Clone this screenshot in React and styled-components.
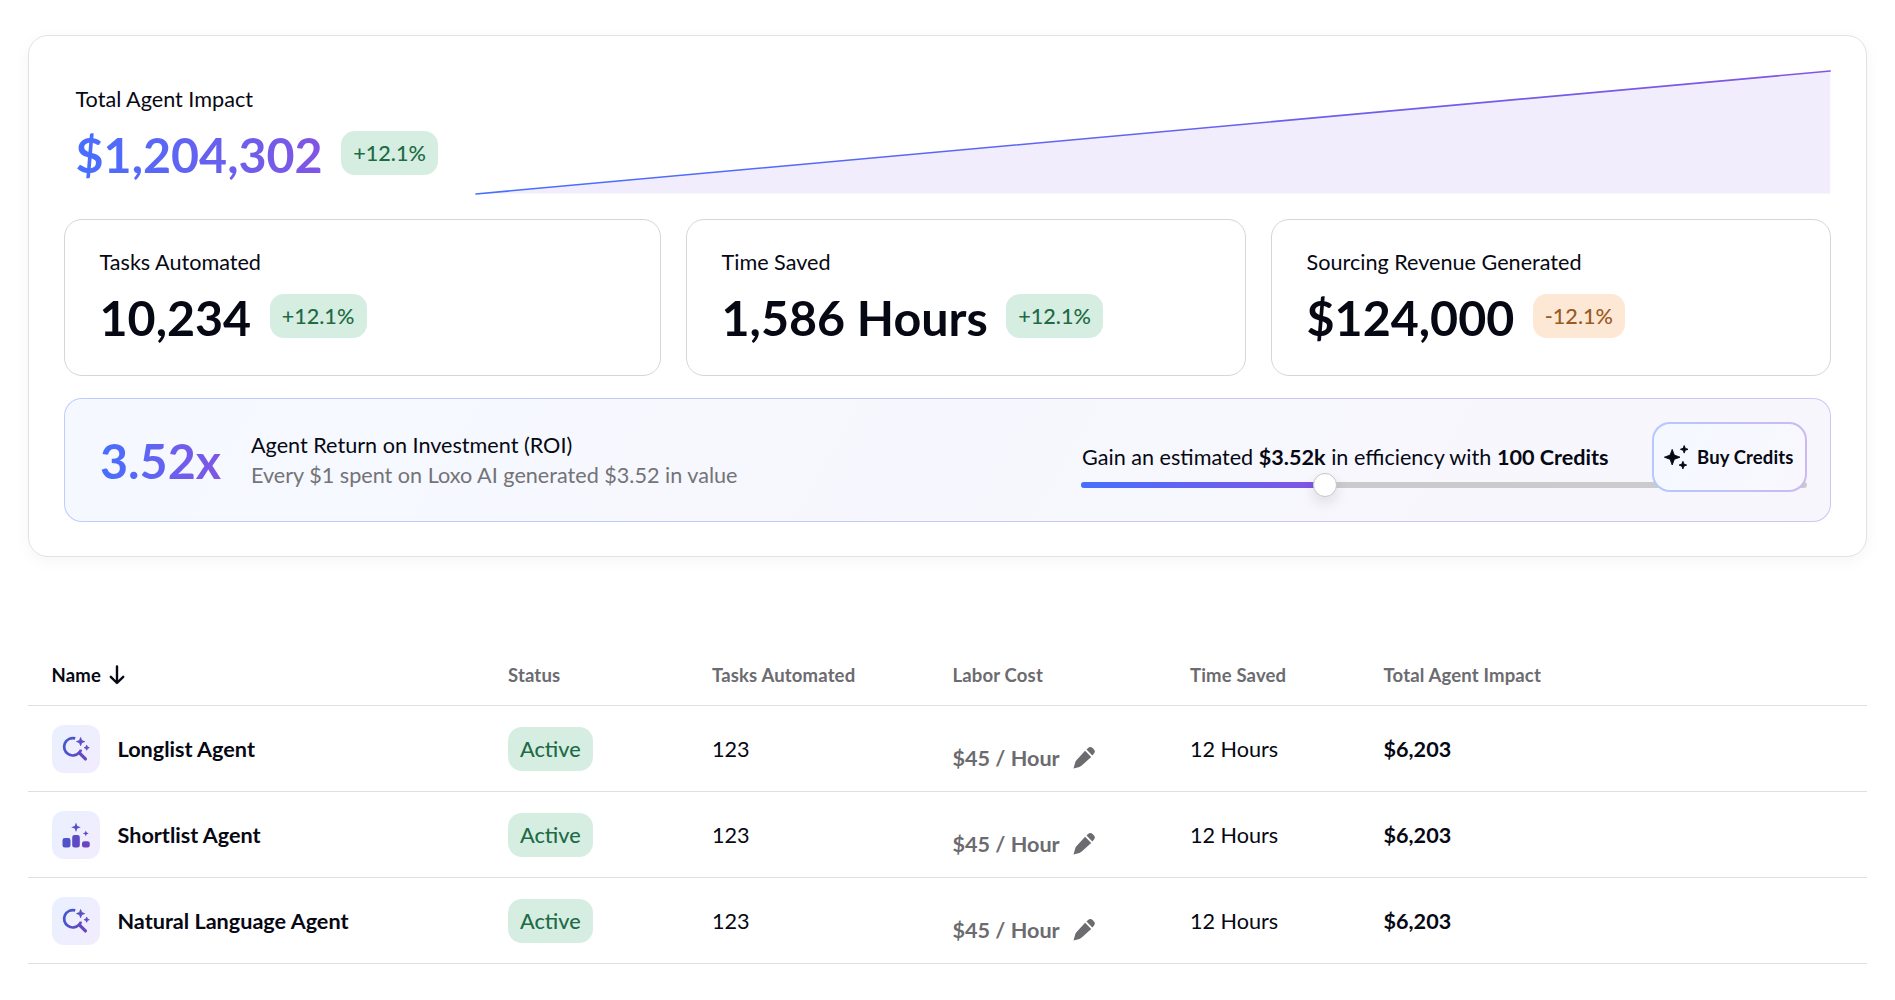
import { useState } from 'react';
import styled, { createGlobalStyle } from 'styled-components';

const GlobalStyle = createGlobalStyle`
  * {
    box-sizing: border-box;
  }
  body {
    margin: 0;
    background-color: #fff;
    color: #060813;
    font-family: Lato, 'Liberation Sans', sans-serif;
    font-size: 21.62px;
    line-height: 30px;
  }
`;

const Page = styled.div`
  padding: 35px 28px 0 27.5px;
`;
const ImpactCard = styled.section`
  height: 522px;
  padding: 34px 35px;
  border: 1px solid #e2e2e4;
  border-radius: 20px;
  background-color: #fff;
  box-shadow: 0 4px 16px rgba(0, 0, 0, 0.045);
`;
const TotalRow = styled.div`
  display: flex;
  height: 125px;
`;
const TotalBlock = styled.div`
  width: 411.5px;
  padding: 14px 0 0 12px;
`;
const Label = styled.div`
  white-space: nowrap;
`;
const ValueRow = styled.div`
  display: flex;
  align-items: center;
  height: 58px;
  margin-top: 10px;
`;
const Value = styled.div`
  margin-right: 18.5px;
  padding-top: 2px;
  font-size: 48.4px;
  font-weight: 700;
  line-height: 58px;
  white-space: nowrap;
`;
const GradientValue = styled(Value)`
  background: linear-gradient(90deg, #476fff, #8155e3);
  background-clip: text;
  color: transparent;
`;
const Badge = styled.span`
  display: inline-flex;
  align-items: center;
  height: 44px;
  padding: 0 12.3px 0 12px;
  border-radius: 14px;
  font-weight: 500;
  color: ${({ $tone }) => ($tone === 'down' ? '#9a5a23' : '#1e6b46')};
  background-color: ${({ $tone }) => ($tone === 'down' ? '#fde8d6' : '#d6eee1')};
`;
const Chart = styled.svg`
  display: block;
  width: 1357px;
  height: 125px;
`;

const StatRow = styled.div`
  display: grid;
  grid-template-columns: 597px 560px 560px;
  column-gap: 25px;
  margin-top: 24px;
`;
const StatCard = styled.div`
  height: 157px;
  padding: 27px 35px;
  border: 1px solid #d6d6d8;
  border-radius: 18px;
`;

const RoiBar = styled.div`
  display: flex;
  align-items: center;
  height: 124px;
  margin-top: 22px;
  padding: 0 23px 0 35.5px;
  border: 1px solid transparent;
  border-radius: 18px;
  background:
    linear-gradient(120deg, #f5f9ff, #f8f6fd) padding-box,
    linear-gradient(90deg, #bccdff, #d2c3f7) border-box;
`;
const RoiValue = styled(GradientValue)`
  padding-top: 0;
`;
const RoiText = styled.div`
  flex: 1;
  margin-left: 11.5px;
`;
const Muted = styled.div`
  color: #737378;
`;
const Purchase = styled.div`
  position: relative;
  width: 726px;
  height: 76px;
  padding-top: 20px;
`;
const Offer = styled.div`
  padding-left: 1px;
`;
const Track = styled.div`
  display: flex;
  align-items: center;
  height: 6px;
  margin-top: 10px;
  border-radius: 3px;
  background-color: #cbcbcb;
`;
const Fill = styled.div`
  height: 6px;
  border-radius: 3px 0 0 3px;
  background: linear-gradient(90deg, #476fff, #8155e3);
`;
const Thumb = styled.div`
  width: 24px;
  height: 24px;
  margin-left: -12px;
  border: 1px solid #c6c6c9;
  border-radius: 50%;
  background-color: #fff;
  box-shadow: 0 6px 14px rgba(0, 0, 0, 0.11);
`;
// sits on top of the end of the slider
const BuyButton = styled.button`
  position: absolute;
  top: 0;
  right: 0;
  display: flex;
  align-items: center;
  gap: 8px;
  width: 155px;
  height: 70px;
  padding: 0 0 0 10px;
  border: 2px solid transparent;
  border-radius: 18px;
  background:
    linear-gradient(120deg, #f4f9ff, #f9f7fe) padding-box,
    linear-gradient(90deg, #b5c8ff, #cbb9f5) border-box;
  color: inherit;
  font-family: inherit;
  font-size: 18.5px;
  font-weight: 700;
  letter-spacing: 0.12px;
  white-space: nowrap;
  cursor: pointer;
`;

const AgentTable = styled.section`
  margin-top: 88px;
`;
const Row = styled.div`
  display: grid;
  grid-template-columns: 456.5px 204px 240.5px 237.5px 193.5px 1fr;
  align-items: center;
  height: ${({ $head }) => ($head ? '61px' : '86px')};
  padding-left: 24px;
  padding-top: ${({ $head }) => ($head ? '0' : '1px')};
  border-bottom: 1px solid #dfdfe2;
`;
const HeadCell = styled.div`
  display: flex;
  align-items: center;
  gap: 8.5px;
  font-size: 18.5px;
  font-weight: 700;
  letter-spacing: 0.16px;
  color: ${({ $active }) => ($active ? '#060813' : '#6b6b70')};
`;
const NameCell = styled.div`
  display: flex;
  align-items: center;
  gap: 18px;
  font-weight: 700;
`;
const IconTile = styled.div`
  display: flex;
  align-items: center;
  justify-content: center;
  width: 48px;
  height: 48px;
  border-radius: 12px;
  background: linear-gradient(120deg, #e9f0ff, #f2ecfd);
`;
const LaborCell = styled.div`
  display: flex;
  align-items: center;
  gap: 13px;
  padding-top: 18px;
  font-weight: 700;
  color: #6b6b70;
`;
const Strong = styled.div`
  font-weight: 700;
`;

const STATS = [
  { label: 'Tasks Automated', value: '10,234', change: '+12.1%', tone: 'up' },
  { label: 'Time Saved', value: '1,586 Hours', change: '+12.1%', tone: 'up' },
  {
    label: 'Sourcing Revenue Generated',
    value: '$124,000',
    change: '-12.1%',
    tone: 'down',
  },
];

const AGENTS = [
  { name: 'Longlist Agent', icon: 'search' },
  { name: 'Shortlist Agent', icon: 'podium' },
  { name: 'Natural Language Agent', icon: 'search' },
];

const COLUMNS = [
  'Status',
  'Tasks Automated',
  'Labor Cost',
  'Time Saved',
  'Total Agent Impact',
];

// four pointed star around (x, y) with radius r
function star(x, y, r) {
  const k = r * 0.27;
  return `M${x} ${y - r}L${x + k} ${y - k}L${x + r} ${y}L${x + k} ${y + k}L${x} ${y + r}L${x - k} ${y + k}L${x - r} ${y}L${x - k} ${y - k}Z`;
}

function IconGradient({ id }) {
  return (
    <defs>
      <linearGradient
        id={id}
        x1="0"
        y1="0"
        x2="28"
        y2="12"
        gradientUnits="userSpaceOnUse"
      >
        <stop stopColor="#3c5bd2" />
        <stop offset="1" stopColor="#6a45bd" />
      </linearGradient>
    </defs>
  );
}

function SearchIcon() {
  return (
    <svg width="28" height="28" viewBox="0 0 28 28" fill="none">
      <IconGradient id="searchFill" />
      <path
        d="M13.2 3.4A8.7 8.7 0 1 0 17.2 17.7Q18.6 16.6 18.8 14.6"
        stroke="url(#searchFill)"
        strokeWidth="2.7"
      />
      <path
        d="M17.3 17.8L23.4 23.9"
        stroke="url(#searchFill)"
        strokeWidth="3.3"
        strokeLinecap="round"
      />
      <path
        d={star(18.6, 6.6, 4.1) + star(24.7, 12.7, 2.6)}
        fill="url(#searchFill)"
        stroke="url(#searchFill)"
        strokeWidth="0.8"
        strokeLinejoin="round"
      />
    </svg>
  );
}

function PodiumIcon() {
  return (
    <svg width="28" height="28" viewBox="0 0 28 28">
      <IconGradient id="podiumFill" />
      <g fill="url(#podiumFill)">
        <path d="M2.8 17h3.4a2.3 2.3 0 0 1 2.3 2.3v5a2.3 2.3 0 0 1-2.3 2.3H2.8a2.3 2.3 0 0 1-2.3-2.3v-5A2.3 2.3 0 0 1 2.8 17z" />
        <path d="M12.5 14h3a2.3 2.3 0 0 1 2.3 2.3v8a2.3 2.3 0 0 1-2.3 2.3h-3a2.3 2.3 0 0 1-2.3-2.3v-8a2.3 2.3 0 0 1 2.3-2.3z" />
        <path d="M22.3 20.2h3.2a2.3 2.3 0 0 1 2.3 2.3v1.8a2.3 2.3 0 0 1-2.3 2.3h-3.2a2.3 2.3 0 0 1-2.3-2.3v-1.8a2.3 2.3 0 0 1 2.3-2.3z" />
        <path d={star(14, 6.3, 4.8) + star(23.8, 12.4, 3)} />
      </g>
    </svg>
  );
}

function SparklesIcon() {
  return (
    <svg width="25" height="25" viewBox="0 0 25 25" fill="currentColor">
      <path
        d={star(8.2, 12.2, 7.8) + star(20.2, 4.3, 3.8) + star(18.9, 20.1, 3.8)}
        stroke="currentColor"
        strokeWidth="0.9"
        strokeLinejoin="round"
      />
    </svg>
  );
}

function ArrowDownIcon() {
  return (
    <svg width="16" height="20" viewBox="0 0 16 20" fill="none">
      <path
        d="M8 1.5v16.2M1.8 11.8L8 18l6.2-6.2"
        stroke="currentColor"
        strokeWidth="2.4"
        strokeLinecap="round"
        strokeLinejoin="round"
      />
    </svg>
  );
}

function PencilIcon() {
  return (
    <svg width="22" height="22" viewBox="0 0 22 22" fill="currentColor">
      <path d="M12.1 3.8l6.1 6.1L8.7 18.6c-.7.6-1.4 1-2.3 1.3L.5 21.6l1.7-6.1c.2-.9.7-1.7 1.4-2.4z" />
      <path d="M13.5 2.6l1.3-1.3a3.6 3.6 0 0 1 5 0l.8.8a3.6 3.6 0 0 1 0 5l-1.3 1.3z" />
    </svg>
  );
}

function ImpactChart() {
  return (
    <Chart viewBox="0 0 1357 125">
      <defs>
        <linearGradient id="chartLine" x1="0" y1="0" x2="1" y2="0">
          <stop stopColor="#476fff" />
          <stop offset="1" stopColor="#8155e3" />
        </linearGradient>
      </defs>
      <path d="M0 124L1356 1V123.5H0z" fill="#f2edfd" />
      <path
        d="M1 124L1356 1"
        stroke="url(#chartLine)"
        strokeWidth="1.6"
        strokeLinecap="round"
      />
    </Chart>
  );
}

function App() {
  const [credits] = useState(33.6);

  return (
    <>
      <GlobalStyle />
      <Page>
        <ImpactCard>
          <TotalRow>
            <TotalBlock>
              <Label>Total Agent Impact</Label>
              <ValueRow>
                <GradientValue>$1,204,302</GradientValue>
                <Badge>+12.1%</Badge>
              </ValueRow>
            </TotalBlock>
            <ImpactChart />
          </TotalRow>
          <StatRow>
            {STATS.map((stat) => (
              <StatCard key={stat.label}>
                <Label>{stat.label}</Label>
                <ValueRow>
                  <Value>{stat.value}</Value>
                  <Badge $tone={stat.tone}>{stat.change}</Badge>
                </ValueRow>
              </StatCard>
            ))}
          </StatRow>
          <RoiBar>
            <RoiValue>3.52x</RoiValue>
            <RoiText>
              <div>Agent Return on Investment (ROI)</div>
              <Muted>Every $1 spent on Loxo AI generated $3.52 in value</Muted>
            </RoiText>
            <Purchase>
              <Offer>
                Gain an estimated <b>$3.52k</b> in efficiency with{' '}
                <b>100 Credits</b>
              </Offer>
              <Track>
                <Fill style={{ width: `${credits}%` }} />
                <Thumb />
              </Track>
              <BuyButton type="button">
                <SparklesIcon />
                Buy Credits
              </BuyButton>
            </Purchase>
          </RoiBar>
        </ImpactCard>

        <AgentTable>
          <Row $head>
            <HeadCell $active>
              Name
              <ArrowDownIcon />
            </HeadCell>
            {COLUMNS.map((column) => (
              <HeadCell key={column}>{column}</HeadCell>
            ))}
          </Row>
          {AGENTS.map((agent) => (
            <Row key={agent.name}>
              <NameCell>
                <IconTile>
                  {agent.icon === 'search' ? <SearchIcon /> : <PodiumIcon />}
                </IconTile>
                {agent.name}
              </NameCell>
              <div>
                <Badge>Active</Badge>
              </div>
              <div>123</div>
              <LaborCell>
                $45 / Hour
                <PencilIcon />
              </LaborCell>
              <div>12 Hours</div>
              <Strong>$6,203</Strong>
            </Row>
          ))}
        </AgentTable>
      </Page>
    </>
  );
}
export default App;
